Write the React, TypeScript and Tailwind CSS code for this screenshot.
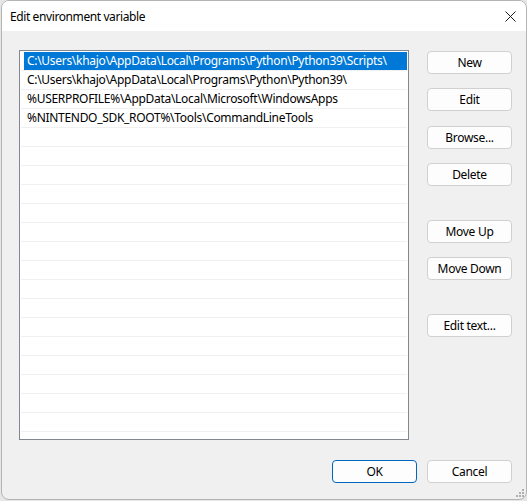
const paths = [
  'C:\\Users\\khajo\\AppData\\Local\\Programs\\Python\\Python39\\Scripts\\',
  'C:\\Users\\khajo\\AppData\\Local\\Programs\\Python\\Python39\\',
  '%USERPROFILE%\\AppData\\Local\\Microsoft\\WindowsApps',
  '%NINTENDO_SDK_ROOT%\\Tools\\CommandLineTools',
]

const font = { fontFamily: '"Segoe UI", "Noto Sans", sans-serif' }

function DialogButton({
  label,
  primary = false,
  className = '',
}: {
  label: string
  primary?: boolean
  className?: string
}) {
  return (
    <button
      className={`block w-[85px] h-[23px] rounded-[4px] border text-[12px] tracking-[-0.3px] text-black bg-[#fdfdfd] leading-none ${
        primary ? 'border-[#0067c0]' : 'border-[#d0d0d0]'
      } ${className}`}
    >
      {label}
    </button>
  )
}

export default function App() {
  // pad the list with empty rows so the grid lines run to the bottom
  const rows = [...paths, ...Array(18).fill('')]

  return (
    <div className="w-[527px] h-[501px] bg-[#e6e6e6] text-black" style={font}>
      <div className="ml-[1px] w-[526px] h-[500px] rounded-lg border border-[#b4b4b4] bg-[#f0f0f0] overflow-hidden flex flex-col relative">
        {/* title bar */}
        <div className="h-[30px] bg-white flex items-center justify-between shrink-0">
          <span className="pl-[8px] text-[12px] tracking-[-0.4px] pt-[1px]">Edit environment variable</span>
          <svg className="mr-[10px]" width="11" height="11" viewBox="0 0 11 11">
            <path d="M0.5 0.5 L10.5 10.5 M10.5 0.5 L0.5 10.5" stroke="#1a1a1a" strokeWidth="1" />
          </svg>
        </div>

        <div className="flex pt-[19px] pl-[17px]">
          {/* path list */}
          <div className="w-[390px] h-[390px] border border-[#828790] bg-white overflow-hidden pt-[1px] px-[1px]">
            {rows.map((p, i) => (
              <div key={i} className="h-[19px] border-b border-[#f0f0f0] flex">
                <div
                  className={`ml-[3px] flex-1 h-[18px] flex items-center pl-[3px] text-[12px] tracking-[-0.3px] whitespace-nowrap ${
                    i === 0 ? 'bg-[#0078d7] text-white' : ''
                  }`}
                >
                  {p}
                </div>
              </div>
            ))}
          </div>

          {/* side buttons */}
          <div className="ml-[18px] mt-[1px] flex flex-col">
            <DialogButton label="New" />
            <DialogButton label="Edit" className="mt-[14px]" />
            <DialogButton label="Browse..." className="mt-[15px]" />
            <DialogButton label="Delete" className="mt-[14px]" />
            <DialogButton label="Move Up" className="mt-[34px]" />
            <DialogButton label="Move Down" className="mt-[14px]" />
            <DialogButton label="Edit text..." className="mt-[34px]" />
          </div>
        </div>

        {/* OK / Cancel */}
        <div className="flex justify-end gap-[10px] pr-[14px] mt-[20px]">
          <DialogButton label="OK" primary />
          <DialogButton label="Cancel" />
        </div>

        {/* resize grip */}
        <svg className="absolute right-[2px] bottom-[2px]" width="9" height="9" viewBox="0 0 9 9">
          <rect x="7" y="1" width="2" height="2" fill="#b0b0b0" />
          <rect x="4" y="4" width="2" height="2" fill="#b0b0b0" />
          <rect x="7" y="4" width="2" height="2" fill="#b0b0b0" />
          <rect x="1" y="7" width="2" height="2" fill="#b0b0b0" />
          <rect x="4" y="7" width="2" height="2" fill="#b0b0b0" />
          <rect x="7" y="7" width="2" height="2" fill="#b0b0b0" />
        </svg>
      </div>
    </div>
  )
}
